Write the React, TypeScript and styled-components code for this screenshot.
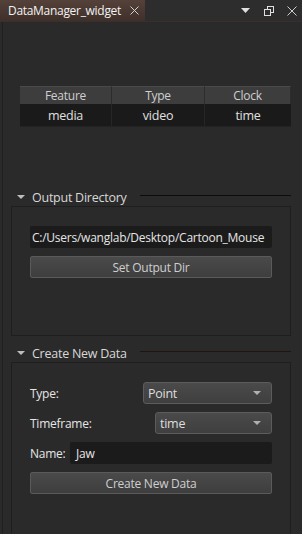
import React from "react";
import styled, { createGlobalStyle } from "styled-components";

const Global = createGlobalStyle`
  html, body { margin: 0; padding: 0; background: #2a2a2a; }
  body { font-family: "Open Sans", "Noto Sans", sans-serif; font-size: 12px; letter-spacing: -0.25px; color: #dcdcdc; }
  * { box-sizing: border-box; }
`;

const Dock = styled.div`
  width: 302px;
  height: 534px;
  display: flex;
  flex-direction: column;
  overflow: hidden;
  background: #2a2a2a;
`;

const TitleBar = styled.div`
  height: 22px;
  flex: none;
  display: flex;
  align-items: stretch;
  background: #2d2d2d;
  border-bottom: 1px solid #3a2f2a;
`;

const Tab = styled.div`
  width: 145px;
  display: flex;
  align-items: center;
  gap: 9px;
  padding-left: 8px;
  background: linear-gradient(#54413a, #3f302a);
  color: #f2f2f2;
  font-size: 12px;
  letter-spacing: -0.3px;
  svg { flex: none; }
`;

const TitleActions = styled.div`
  margin-left: auto;
  display: flex;
  align-items: center;
  gap: 10px;
  padding-right: 4px;
`;

const IconBox = styled.span`
  width: 13px;
  height: 13px;
  display: flex;
  align-items: center;
  justify-content: center;
`;

const Content = styled.div`
  flex: 1;
  margin-left: 2px;
  border-left: 1px solid #1f1f1f;
  display: flex;
  flex-direction: column;
`;

const Table = styled.div`
  margin: 64px 0 0 17px;
  width: 271px;
  display: grid;
  grid-template-columns: 92px 93px 86px;
  background: #1a1a1a;
  border-bottom: 1px solid #232323;
`;

const HeadCell = styled.div`
  height: 18px;
  display: flex;
  align-items: center;
  justify-content: center;
  background: #3d3d3d;
  border-top: 1px solid #4a4a4a;
  border-right: 1px solid #2c2c2c;
  color: #cfcfcf;
  &:last-child { border-right: none; }
`;

const Cell = styled.div`
  height: 22px;
  display: flex;
  align-items: center;
  justify-content: center;
  border-right: 1px solid #262626;
  color: #e0e0e0;
  font-size: 12.5px;
  &:nth-child(3n) { border-right: none; }
`;

const SectionHeader = styled.div<{ $top: number }>`
  margin-top: ${(p) => p.$top}px;
  height: 16px;
  flex: none;
  display: flex;
  align-items: center;
  padding-left: 14px;
  padding-right: 11px;
  color: #d8d8d8;
  font-size: 12.5px;
`;

const Rule = styled.div<{ $color: string }>`
  margin-left: auto;
  width: 151px;
  height: 1px;
  margin-top: -4px;
  background: ${(p) => p.$color};
`;

const Arrow = styled.span`
  width: 0;
  height: 0;
  border-left: 4px solid transparent;
  border-right: 4px solid transparent;
  border-top: 4px solid #bdbdbd;
  margin-right: 7px;
`;

const GroupFrame = styled.div<{ $height?: number }>`
  margin: 1px 11px 0 8px;
  border: 1px solid #1e1e1e;
  ${(p) => (p.$height ? `height: ${p.$height}px; flex: none;` : "flex: 1; border-bottom: none;")}
  padding: 19px 18px 0 18px;
  display: flex;
  flex-direction: column;
  gap: 8px;
`;

const TextField = styled.div<{ $small?: boolean }>`
  height: 22px;
  flex: 1;
  display: flex;
  align-items: center;
  padding-left: ${(p) => (p.$small ? 6 : 2)}px;
  background: #1b1b1b;
  border-radius: 2px;
  color: #e6e6e6;
  font-size: 12px;
  white-space: nowrap;
  overflow: hidden;
`;

const Button = styled.button`
  height: 22px;
  width: 100%;
  flex: none;
  border: 1px solid #5a5a5a;
  border-radius: 2px;
  background: linear-gradient(#4a4a4a, #3e3e3e);
  color: #cfcfcf;
  font-family: inherit;
  letter-spacing: inherit;
  font-size: 12px;
  padding: 0;
`;

const FormRow = styled.div`
  height: 22px;
  flex: none;
  display: flex;
  align-items: center;
`;

const Label = styled.span<{ $width: number }>`
  width: ${(p) => p.$width}px;
  flex: none;
  color: #e6e6e6;
  font-size: 12px;
`;

const Combo = styled.div`
  flex: 1;
  height: 22px;
  display: flex;
  align-items: center;
  padding: 0 10px 0 4px;
  background: linear-gradient(#4a4a4a, #3f3f3f);
  border: 1px solid #5c5c5c;
  border-radius: 3px;
  color: #dedede;
  font-size: 12.5px;
  &::after {
    content: "";
    margin-left: auto;
    border-left: 4px solid transparent;
    border-right: 4px solid transparent;
    border-top: 4px solid #b0b0b0;
  }
`;

export default function App() {
  return (
    <>
      <Global />
      <Dock>
        <TitleBar>
          <Tab>
            DataManager_widget
            <svg width="9" height="9" viewBox="0 0 9 9">
              <path d="M0.5 0.5 L8.5 8.5 M8.5 0.5 L0.5 8.5" stroke="#d0d0d0" strokeWidth="1" />
            </svg>
          </Tab>
          <TitleActions>
            <IconBox>
              <svg width="9" height="5" viewBox="0 0 9 5">
                <path d="M0 0 H9 L4.5 5 Z" fill="#e0e0e0" />
              </svg>
            </IconBox>
            <IconBox>
              <svg width="10" height="10" viewBox="0 0 10 10">
                <rect x="3.5" y="0.5" width="6" height="6" fill="none" stroke="#e0e0e0" />
                <rect x="0.5" y="3.5" width="6" height="6" fill="#2d2d2d" stroke="#e0e0e0" />
              </svg>
            </IconBox>
            <IconBox>
              <svg width="10" height="10" viewBox="0 0 10 10">
                <path d="M0.5 0.5 L9.5 9.5 M9.5 0.5 L0.5 9.5" stroke="#cfcfcf" strokeWidth="1" />
              </svg>
            </IconBox>
          </TitleActions>
        </TitleBar>
        <Content>
          <Table>
            <HeadCell>Feature</HeadCell>
            <HeadCell>Type</HeadCell>
            <HeadCell>Clock</HeadCell>
            <Cell>media</Cell>
            <Cell>video</Cell>
            <Cell>time</Cell>
          </Table>

          <SectionHeader $top={62}>
            <Arrow />
            Output Directory
            <Rule $color="#0c0c0c" />
          </SectionHeader>
          <GroupFrame $height={130}>
            <FormRow>
              <TextField>C:/Users/wanglab/Desktop/Cartoon_Mouse</TextField>
            </FormRow>
            <Button>Set Output Dir</Button>
          </GroupFrame>

          <SectionHeader $top={9}>
            <Arrow />
            Create New Data
            <Rule $color="#23130f" />
          </SectionHeader>
          <GroupFrame>
            <FormRow>
              <Label $width={113}>Type:</Label>
              <Combo>Point</Combo>
            </FormRow>
            <FormRow>
              <Label $width={125}>Timeframe:</Label>
              <Combo>time</Combo>
            </FormRow>
            <FormRow>
              <Label $width={40}>Name:</Label>
              <TextField $small>Jaw</TextField>
            </FormRow>
            <Button>Create New Data</Button>
          </GroupFrame>
        </Content>
      </Dock>
    </>
  );
}
